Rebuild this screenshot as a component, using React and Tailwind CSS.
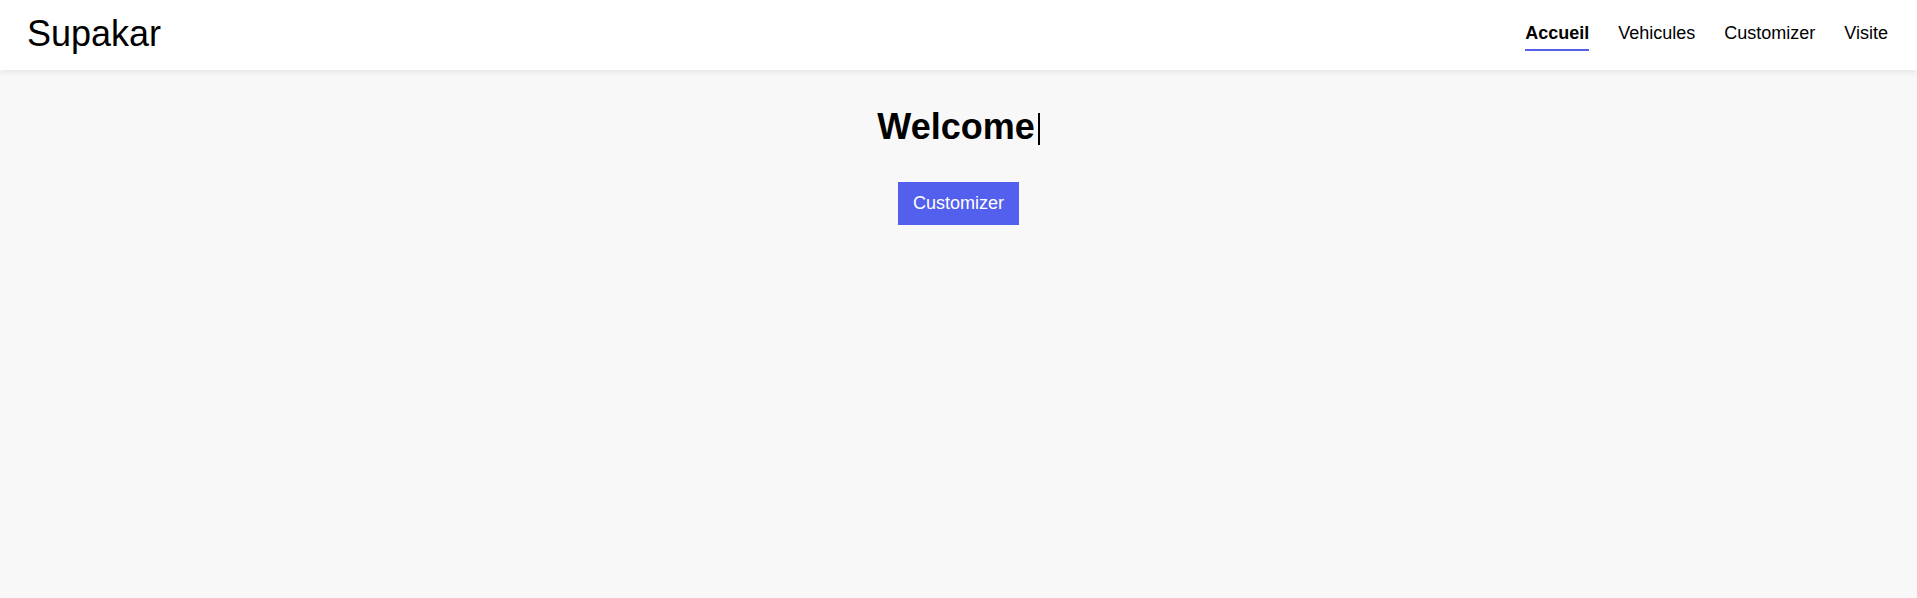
import React from 'react';

const links = ['Accueil', 'Vehicules', 'Customizer', 'Visite'];

const App = () => {
    return (
        <div className="min-h-screen bg-[#f8f8f8] font-['Liberation_Sans',Arial,sans-serif] text-black">
            <header className="h-[70px] bg-white flex items-center justify-between pl-[27px] pr-[29px] shadow-[0_2px_6px_rgba(0,0,0,0.08)]">
                <div className="text-[36px] leading-none mb-[3px]">Supakar</div>
                <nav className="flex items-center gap-[29px] text-[18px] mb-[2px]">
                    {links.map((l, i) => (
                        <a
                            key={l}
                            className={i === 0
                                ? 'font-bold border-b-2 border-[#5460ee] pt-[3px] pb-[2px]'
                                : 'pt-[3px] pb-[4px]'}
                        >
                            {l}
                        </a>
                    ))}
                </nav>
            </header>

            <main className="flex flex-col items-center">
                <h1 className="mt-[35px] text-[36px] font-bold leading-[44px] flex items-center">
                    Welcome
                    <span className="inline-block w-[2px] h-[32px] bg-black ml-[3px] mt-[3px]"></span>
                </h1>
                <button className="mt-[33px] h-[43px] px-[15px] bg-[#5360ed] text-white text-[18px]">
                    Customizer
                </button>
            </main>
        </div>
    )
}

export default App
